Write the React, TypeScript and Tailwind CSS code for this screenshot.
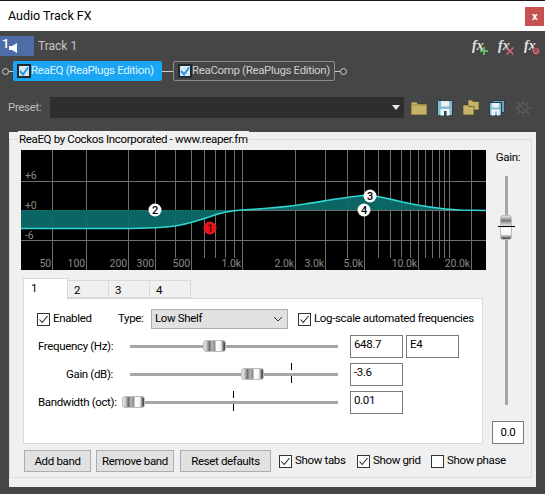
const UI_FONT = "font-['Roboto','Open_Sans',sans-serif]";

const FULL_LINES = [52, 86, 128, 155, 191, 242, 295, 325, 364, 418, 471];
const MINOR_LINES = [175, 204, 215, 225, 234, 347, 378, 390, 401, 410, 425, 432, 439, 444, 449];
const FREQ_LABELS: [string, number][] = [
  ['50', 51], ['100', 85], ['200', 127], ['300', 154], ['500', 190], ['1.0k', 241],
  ['2.0k', 294], ['3.0k', 324], ['5.0k', 363], ['10.0k', 417], ['20.0k', 470],
];
const CURVE =
  'M21 228.5 L120 228.5 C150 228.5 165 228 178 225.5 C192 223 205 218.5 218 214 C228 211 236 210 250 209.5 C268 208.5 285 207 305 204 C325 201 345 197 364 195.5 C376 195 385 198 400 201.5 C420 206 440 209 460 210 L486 210.5';

function EqGraph() {
  return (
    <svg viewBox="21 150 465 120" className="block w-[465px] h-[120px] bg-black">
      {[181, 210, 240].map((y) => (
        <line key={y} x1="21" x2="486" y1={y + 0.5} y2={y + 0.5} stroke="#6e6e6e" />
      ))}
      {FULL_LINES.map((x) => (
        <line key={x} x1={x + 0.5} x2={x + 0.5} y1="150" y2="270" stroke="#6e6e6e" />
      ))}
      {MINOR_LINES.map((x) => (
        <line key={x} x1={x + 0.5} x2={x + 0.5} y1="150" y2="258" stroke="#6e6e6e" />
      ))}
      <path d={CURVE + ' L486 210 L21 210 Z'} fill="#0b6a68" fillOpacity="0.95" />
      <path d={CURVE} fill="none" stroke="#2fd6d2" strokeWidth="1.6" />
      <g fontFamily="Roboto, sans-serif" fontSize="10.5" letterSpacing="-0.1" fill="#8a8a8a">
        <text x="25" y="179">+6</text>
        <text x="25" y="209">+0</text>
        <text x="25" y="239">-6</text>
        {FREQ_LABELS.map(([t, x]) => (
          <text key={t} x={x} y="267" textAnchor="end">{t}</text>
        ))}
      </g>
      <Handle x={155} y={210} label="2" />
      <Handle x={210} y={228} label="1" red />
      <Handle x={370} y={196} label="3" />
      <Handle x={364} y={210} label="4" />
    </svg>
  );
}

function Handle({ x, y, label, red }: { x: number; y: number; label: string; red?: boolean }) {
  return (
    <g>
      <circle cx={x} cy={y} r="6.5" fill={red ? '#e8141c' : '#ffffff'} />
      <text x={x} y={y + 4} textAnchor="middle" fontFamily="Roboto, sans-serif" fontSize="11" fontWeight="500" fill={red ? '#4a0000' : '#000000'}>
        {label}
      </text>
    </g>
  );
}

function Thumb({ left }: { left: number }) {
  return (
    <div
      className="absolute top-[-5px] h-[12px] w-[23px] rounded-[3px] border border-[#bdbdbd] bg-[linear-gradient(to_right,#e8e8e8_0%,#c8c8c8_12%,#6e6e6e_26%,#b8b8b8_38%,#8e8e8e_50%,#ffffff_60%,#f4f4f4_80%,#4a4a4a_96%)]"
      style={{ left }}
    />
  );
}

function HSlider({ thumb, tick }: { thumb: number; tick?: number }) {
  return (
    <div className="relative h-[3px] w-[208px] shrink-0 bg-[#a6a6a6]">
      {tick !== undefined && (
        <div
          className="absolute top-[-10px] h-[20px] w-px bg-[linear-gradient(to_bottom,#000_0%,#000_35%,transparent_35%,transparent_65%,#000_65%,#000_100%)]"
          style={{ left: tick }}
        />
      )}
      <Thumb left={thumb} />
    </div>
  );
}

function Check({ checked, label }: { checked?: boolean; label: string }) {
  return (
    <label className="flex items-center gap-[3px] whitespace-nowrap">
      <span className="flex h-[13px] w-[13px] shrink-0 items-center justify-center border border-[#333] bg-white">
        {checked && (
          <svg viewBox="0 0 11 11" className="h-[11px] w-[11px]">
            <path d="M1.5 5.5 L4.2 8.5 L9.5 2" fill="none" stroke="#222" strokeWidth="1.1" />
          </svg>
        )}
      </span>
      <span>{label}</span>
    </label>
  );
}

function Field({ value, w }: { value: string; w: string }) {
  return <div className={`h-[23px] ${w} shrink-0 border border-[#7a7a7a] bg-white px-[3px] leading-[17px]`}>{value}</div>;
}

function Btn({ label, w }: { label: string; w: string }) {
  return (
    <button className={`h-[22px] ${w} shrink-0 whitespace-nowrap border border-[#adadad] bg-[#e1e1e1] text-center leading-[18px]`}>{label}</button>
  );
}

function ChainCheck() {
  return (
    <span className="flex h-[14px] w-[14px] shrink-0 items-center justify-center border-2 border-[#1c2a33] bg-[#dbe8ef]">
      <svg viewBox="0 0 10 10" className="h-[10px] w-[10px]">
        <path d="M1 5 L4 8.5 L9 1.5" fill="none" stroke="#1f9be8" strokeWidth="2" />
      </svg>
    </span>
  );
}

function Pin() {
  return <span className="block h-[7px] w-[7px] shrink-0 rounded-full border border-[#cfcfcf]" />;
}

function Wire({ w }: { w: string }) {
  return <span className={`block h-px ${w} shrink-0 bg-[#cfcfcf]`} />;
}

function FxIcon({ badge }: { badge: 'add' | 'del' | 'r' }) {
  return (
    <div className="relative h-[15px] w-[16px] font-['Liberation_Serif',serif] text-[14px] italic font-bold leading-[13px] tracking-normal text-[#e4e4e4]">
      fx
      <svg viewBox="0 0 8 8" className="absolute left-[8px] top-[8px] h-[8px] w-[8px]">
        {badge === 'add' && <path d="M3 0h2v3h3v2H5v3H3V5H0V3h3z" fill="#62b56a" />}
        {badge === 'del' && <path d="M1 0l3 3 3-3 1 1-3 3 3 3-1 1-3-3-3 3-1-1 3-3-3-3z" fill="#d9687a" />}
        {badge === 'r' && (
          <>
            <circle cx="4" cy="4" r="3.5" fill="#d98a9a" stroke="#7a2b3a" strokeWidth="0.8" />
            <path d="M3 6V2h1.5a1 1 0 0 1 0 2H3m1.5 0L5.5 6" fill="none" stroke="#5a1822" strokeWidth="0.8" />
          </>
        )}
      </svg>
    </div>
  );
}

function FolderIcon() {
  return (
    <svg viewBox="0 0 16 14" className="h-[14px] w-[16px]">
      <path d="M0 1h6l1 2h9v11H0z" fill="#c5b468" stroke="#3a3524" strokeWidth="0.6" />
      <path d="M0 4h16" stroke="#8f8348" strokeWidth="0.8" />
    </svg>
  );
}

function FoldersIcon() {
  return (
    <svg viewBox="0 0 16 15" className="h-[15px] w-[16px]">
      <path d="M5 0h4l1 1.5h6V10H5z" fill="#c5b468" stroke="#3a3524" strokeWidth="0.6" />
      <path d="M0 5h5l1 1.5h5V15H0z" fill="#c5b468" stroke="#3a3524" strokeWidth="0.6" />
    </svg>
  );
}

function SaveIcon() {
  return (
    <svg viewBox="0 0 16 16" className="h-[16px] w-[16px]">
      <rect x="0.5" y="0.5" width="15" height="15" fill="#85bcd0" stroke="#24424e" />
      <rect x="4" y="1" width="8" height="5.5" fill="#e9f1f4" />
      <path d="M3.5 15.5V9h9v6.5h-3V11H7v4.5z" fill="#f3f6f7" />
      <rect x="7" y="11" width="2.5" height="4.5" fill="#2b4a57" />
    </svg>
  );
}

function SavesIcon() {
  return (
    <svg viewBox="0 0 16 16" className="h-[16px] w-[16px]">
      <rect x="3.5" y="0.5" width="12" height="12" fill="#6da2b6" stroke="#24424e" />
      <rect x="0.5" y="2.5" width="12" height="13" fill="#85bcd0" stroke="#24424e" />
      <rect x="3" y="3" width="7" height="4.5" fill="#e9f1f4" />
      <path d="M2.5 15.5V9.5h8v6h-2.5v-4H6v4z" fill="#f3f6f7" />
    </svg>
  );
}

function GearIcon() {
  return (
    <svg viewBox="0 0 16 16" className="h-[16px] w-[16px]" fill="none" stroke="#5a5a5a" strokeWidth="1.4">
      <circle cx="8" cy="8" r="4.5" />
      <path d="M8 0v3M8 13v3M0 8h3M13 8h3M2.3 2.3l2 2M11.7 11.7l2 2M13.7 2.3l-2 2M4.3 11.7l-2 2" />
      <path d="M2 2l12 12" />
    </svg>
  );
}

export default function App() {
  return (
    <div className={`h-[494px] w-[545px] overflow-hidden bg-[#464646] text-[11.5px] tracking-[-0.35px] text-black ${UI_FONT}`}>
      {/* title bar */}
      <div className="flex h-[31px] items-center justify-between border-t border-[#1a1a1a] bg-white pl-2 pr-px">
        <span className="text-[12.5px] tracking-normal">Audio Track FX</span>
        <div className="flex h-[19px] w-[19px] items-center justify-center bg-[#c75050] text-[11px] font-bold leading-none text-white">x</div>
      </div>

      {/* track row */}
      <div className="mt-[5px] flex h-[20px] items-center justify-between pr-[5px]">
        <div className="flex items-center">
          <div className="relative h-[20px] w-[34px] bg-[#4e6ca8]">
            <span className="absolute left-[2px] top-[0px] text-[13px] font-medium leading-[15px] text-white">1</span>
            <svg viewBox="0 0 8 10" className="absolute left-[9px] top-[7px] h-[10px] w-[8px]">
              <path d="M0 3h3L8 0v10L3 7H0z" fill="#ffffff" />
            </svg>
          </div>
          <span className="ml-[4px] text-[12px] tracking-normal text-[#c6c6c6]">Track 1</span>
        </div>
        <div className="flex items-center gap-[10px]">
          <FxIcon badge="add" />
          <FxIcon badge="del" />
          <FxIcon badge="r" />
        </div>
      </div>

      {/* fx chain */}
      <div className="mt-[5px] flex h-[20px] items-center pl-[2px]">
        <Pin />
        <Wire w="w-[4px]" />
        <div className="flex h-[20px] w-[149px] shrink-0 items-center rounded-[2px] bg-[#1ba5f5] pl-[4px] text-[#dff2fd]">
          <ChainCheck />
          <span className="whitespace-nowrap">ReaEQ (ReaPlugs Edition)</span>
        </div>
        <Wire w="w-[11px]" />
        <div className="flex h-[20px] w-[162px] shrink-0 items-center rounded-[2px] border border-[#8e8e8e] pl-[4px] text-[#cfcfcf]">
          <ChainCheck />
          <span className="whitespace-nowrap">ReaComp (ReaPlugs Edition)</span>
        </div>
        <Wire w="w-[5px]" />
        <Pin />
      </div>

      {/* preset */}
      <div className="mt-[16px] flex h-[21px] items-center pl-[8px]">
        <span className="w-[42px] text-[#bdbdbd]">Preset:</span>
        <div className="flex h-[21px] w-[354px] items-center justify-end bg-[#2e2e2e] pr-[4px]">
          <svg viewBox="0 0 8 5" className="h-[5px] w-[8px]">
            <path d="M0 0h8L4 5z" fill="#e8e8e8" />
          </svg>
        </div>
        <div className="ml-[7px] flex items-center gap-[10px]">
          <FolderIcon />
          <SaveIcon />
          <FoldersIcon />
          <SavesIcon />
          <GearIcon />
        </div>
      </div>

      {/* plugin panel */}
      <div className="ml-[9px] mt-[14px] h-[355px] w-[527px] bg-[#f0f0f0] pt-[7px]">
        <div className="relative flex h-[339px] w-[523px] border border-[#dcdcdc] pl-[11px] pt-[10px]">
          <span className="absolute left-[8px] top-[-9px] bg-[#f0f0f0] px-px leading-[16px] whitespace-nowrap">
            ReaEQ by Cockos Incorporated - www.reaper.fm
          </span>

          <div className="w-[465px] shrink-0">
            <EqGraph />

            {/* tabs */}
            <div className="ml-[2px] mt-[8px] flex h-[20px] items-end">
              <div className="relative z-10 mb-[-1px] h-[21px] w-[45px] border border-b-0 border-[#d9d9d9] bg-white pl-[7px] leading-[18px]">1</div>
              <div className="h-[18px] w-[41px] border border-l-0 border-[#d9d9d9] bg-[#f0f0f0] pl-[6px] leading-[18px]">2</div>
              <div className="h-[18px] w-[41px] border border-l-0 border-[#d9d9d9] bg-[#f0f0f0] pl-[6px] leading-[18px]">3</div>
              <div className="h-[18px] w-[41px] border border-l-0 border-[#d9d9d9] bg-[#f0f0f0] pl-[6px] leading-[18px]">4</div>
            </div>
            <div className="ml-[2px] h-[146px] w-[460px] border border-[#d9d9d9] bg-white pl-[13px] pt-[10px]">
              <div className="flex h-[20px] items-center">
                <div className="w-[81px] shrink-0"><Check checked label="Enabled" /></div>
                <span className="w-[33px] shrink-0">Type:</span>
                <div className="flex h-[20px] w-[137px] shrink-0 items-center justify-between border border-[#adadad] bg-[#e1e1e1] pl-[3px] pr-[4px]">
                  <span>Low Shelf</span>
                  <svg viewBox="0 0 10 6" className="h-[6px] w-[10px]">
                    <path d="M1 1l4 4 4-4" fill="none" stroke="#333" />
                  </svg>
                </div>
                <div className="ml-[10px]"><Check checked label="Log-scale automated frequencies" /></div>
              </div>
              <div className="mt-[6px] flex flex-col gap-[5px]">
                <div className="flex h-[23px] items-center">
                  <span className="w-[93px] shrink-0 pl-px whitespace-nowrap">Frequency (Hz):</span>
                  <HSlider thumb={73} />
                  <div className="ml-[12px] flex gap-[3px]">
                    <Field value="648.7" w="w-[53px]" />
                    <Field value="E4" w="w-[53px]" />
                  </div>
                </div>
                <div className="flex h-[23px] items-center">
                  <span className="mr-[17px] w-[76px] shrink-0 text-right whitespace-nowrap">Gain (dB):</span>
                  <HSlider thumb={111} tick={161} />
                  <div className="ml-[12px]"><Field value="-3.6" w="w-[53px]" /></div>
                </div>
                <div className="flex h-[23px] items-center">
                  <span className="w-[93px] shrink-0 pl-px whitespace-nowrap">Bandwidth (oct):</span>
                  <HSlider thumb={-8} tick={103} />
                  <div className="ml-[12px]"><Field value="0.01" w="w-[53px]" /></div>
                </div>
              </div>
            </div>

            {/* bottom buttons */}
            <div className="ml-[3px] mt-[6px] flex items-center">
              <Btn label="Add band" w="w-[67px]" />
              <div className="ml-[5px]"><Btn label="Remove band" w="w-[78px]" /></div>
              <div className="ml-[6px]"><Btn label="Reset defaults" w="w-[91px]" /></div>
              <div className="ml-[8px] w-[78px] shrink-0"><Check checked label="Show tabs" /></div>
              <div className="w-[74px] shrink-0"><Check checked label="Show grid" /></div>
              <Check label="Show phase" />
            </div>
          </div>

          {/* gain column */}
          <div className="ml-[6px] flex w-[32px] shrink-0 flex-col items-center">
            <span className="leading-[14px]">Gain:</span>
            <div className="relative mt-[12px] ml-[-3px] h-[229px] w-[3px] bg-[#a6a6a6]">
              <div className="absolute left-[-5px] top-[39px] h-[25px] w-[12px] rounded-[3px] border border-[#bdbdbd] bg-[linear-gradient(to_bottom,#e4e4e4_0%,#777_20%,#c8c8c8_35%,#ffffff_55%,#f2f2f2_80%,#555_97%)]" />
              <div className="absolute left-[-7px] top-[50px] h-px w-[17px] bg-black" />
            </div>
            <div className="mt-[16px] flex h-[23px] w-[32px] items-center justify-center border border-[#7a7a7a] bg-white">0.0</div>
          </div>
        </div>
      </div>
    </div>
  );
}
